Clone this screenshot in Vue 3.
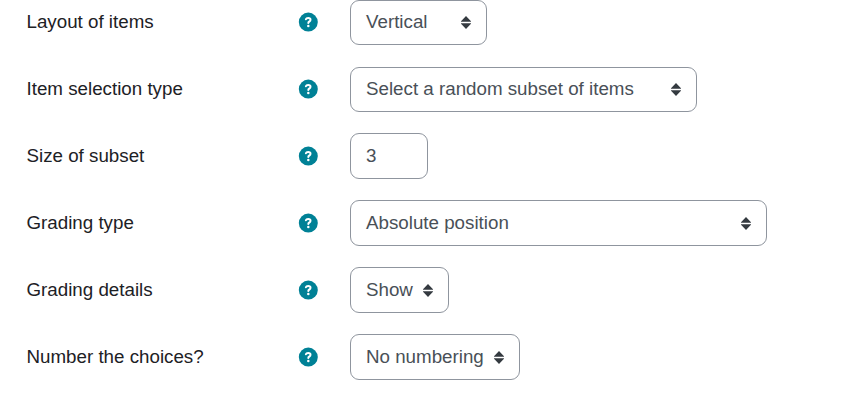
<script setup>
import { ref } from 'vue'

// form rows
const rows = ref([
  { id: 'layout', label: 'Layout of items', value: 'Vertical', width: 137, select: true },
  { id: 'selection', label: 'Item selection type', value: 'Select a random subset of items', width: 347, select: true },
  { id: 'size', label: 'Size of subset', value: '3', width: 78, select: false },
  { id: 'grading', label: 'Grading type', value: 'Absolute position', width: 417, select: true },
  { id: 'details', label: 'Grading details', value: 'Show', width: 99, select: true },
  { id: 'numbering', label: 'Number the choices?', value: 'No numbering', width: 170, select: true },
])
</script>

<template>
  <form class="settings">
    <div v-for="row in rows" :key="row.id" class="row">
      <label class="label">{{ row.label }}</label>
      <svg class="help" viewBox="0 0 20 20">
        <circle cx="10.300" cy="10.100" r="9.500" fill="#008196" />
        <path
          fill="none"
          stroke="#fff"
          stroke-width="2"
          stroke-linecap="round"
          d="M7.900 7.200Q8.300 6 10.100 6Q12.500 6 12.500 7.800Q12.500 8.900 11.400 9.500Q10.300 10.100 10.300 11"
        />
        <circle cx="10.300" cy="14" r="1.250" fill="#fff" />
      </svg>
      <div class="control" :style="{ width: row.width + 'px' }">
        <span>{{ row.value }}</span>
        <svg v-if="row.select" class="arrows" viewBox="0 0 10 13">
          <path fill="#343a40" d="M5 0L0 5.200v.5h10v-.5zM5 13L0 7.800v-.5h10v.5z" />
        </svg>
      </div>
    </div>
  </form>
</template>

<style>
body {
  background: #fff;
  overflow: hidden;
}
</style>

<style scoped>
.settings {
  display: flex;
  flex-direction: column;
  gap: 21px;
  box-sizing: border-box;
  height: 400px;
  font-family: "Liberation Sans", Arial, sans-serif;
  font-size: 18.75px;
}

.row {
  display: flex;
  align-items: center;
  flex: none;
  height: 46px;
}

.row:first-child {
  margin-top: -1px;
}

.label {
  width: 271.5px;
  margin-left: 26.5px;
  color: #1d2125;
}

.help {
  width: 20px;
  height: 20px;
  margin-right: 32px;
}

.control {
  display: flex;
  align-items: center;
  justify-content: space-between;
  box-sizing: border-box;
  height: 46px;
  padding: 0 15px;
  border: 1px solid #8f959e;
  border-radius: 9px;
  color: #495057;
  white-space: nowrap;
}

/* the first two boxes are a little shorter */
.row:nth-child(-n + 2) .control {
  height: 45px;
  margin-top: 1px;
  padding-bottom: 1px;
}

.arrows {
  width: 10px;
  height: 13px;
}
</style>
